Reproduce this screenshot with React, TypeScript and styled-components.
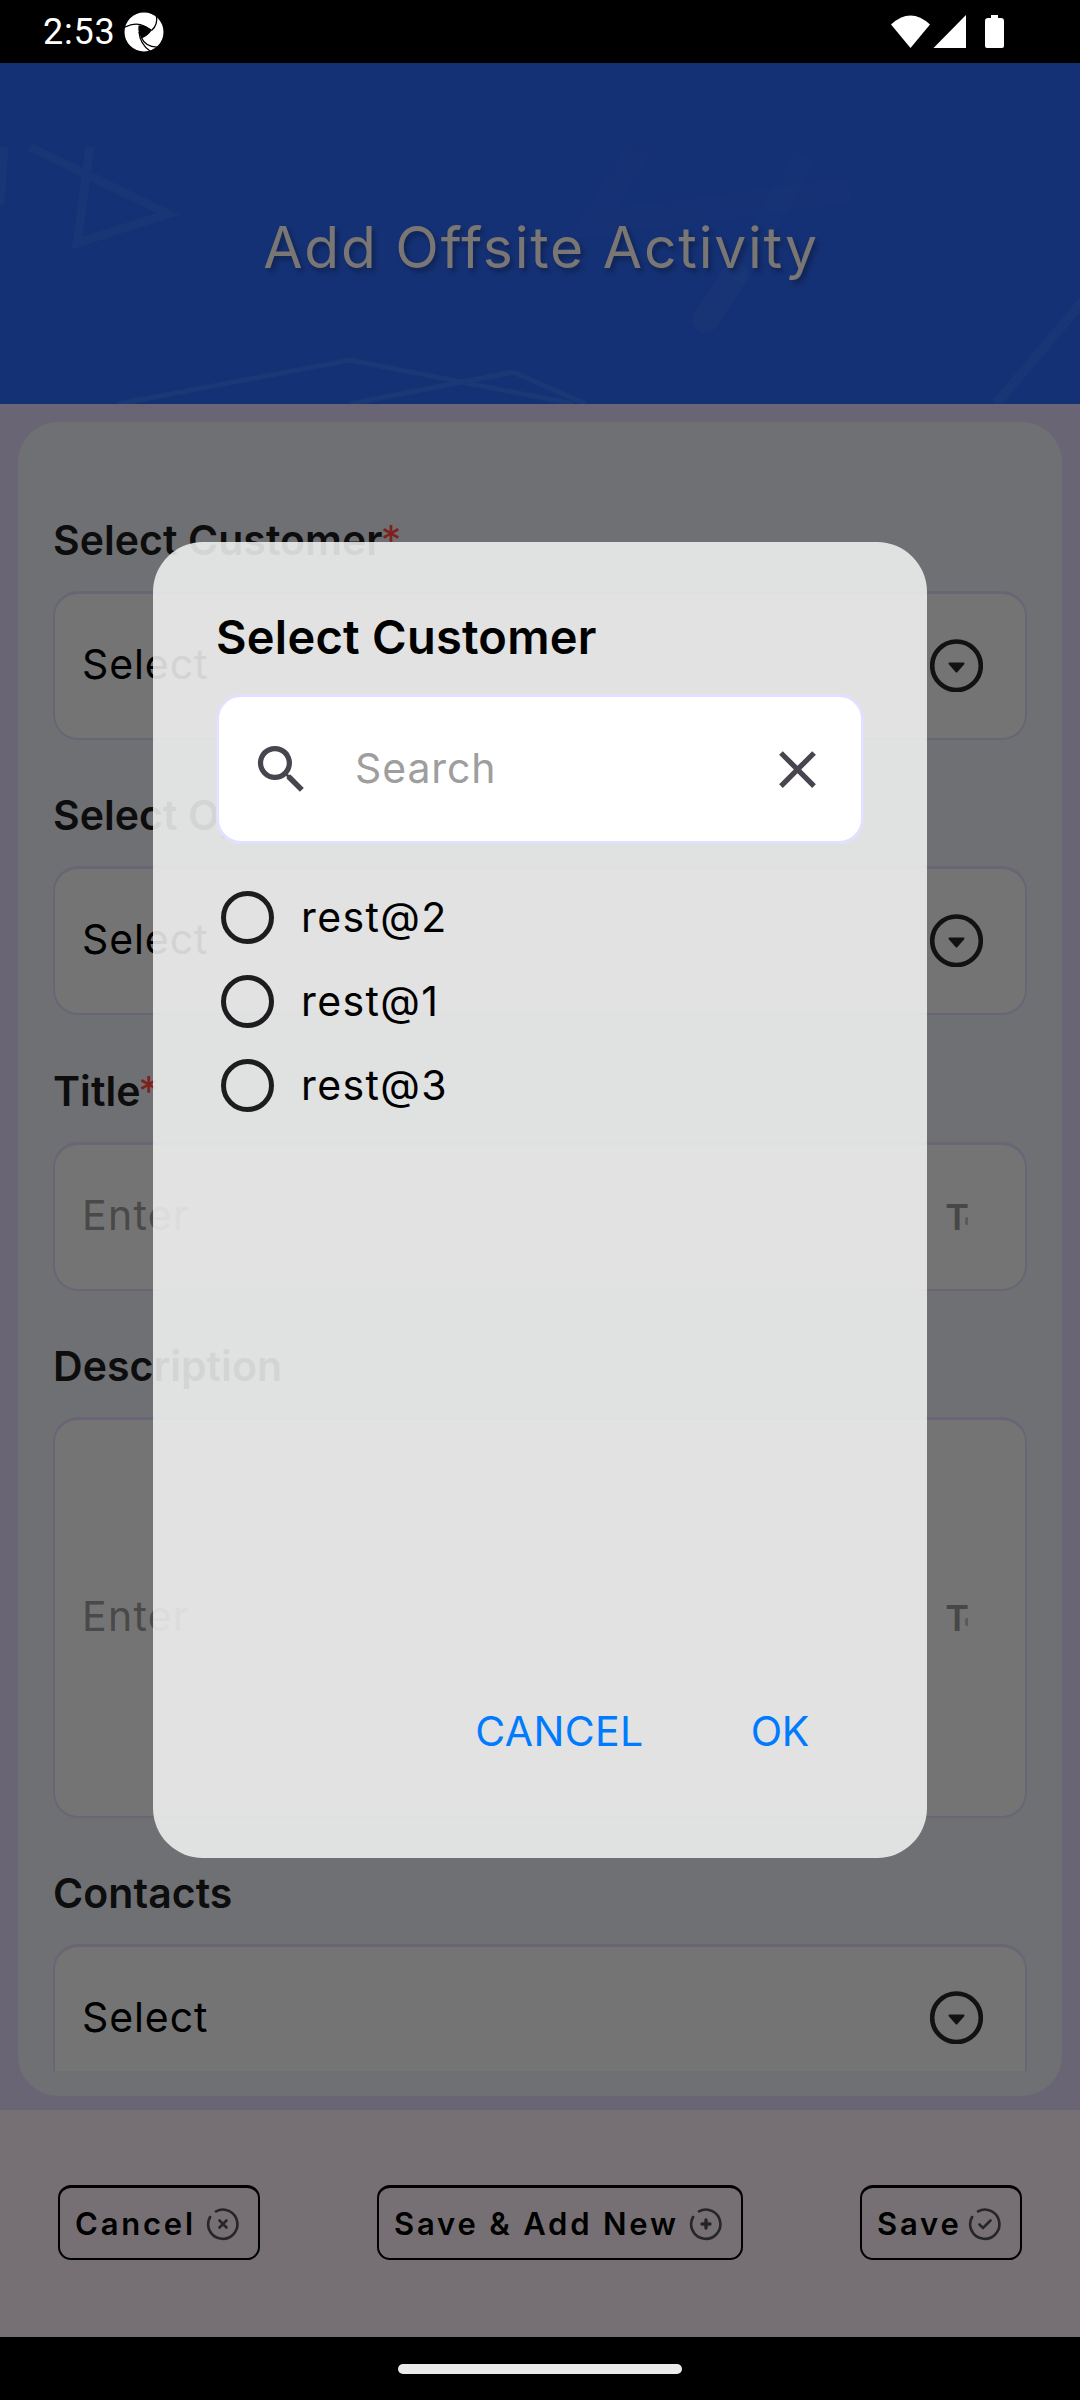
import React from 'react';
import styled, { createGlobalStyle } from 'styled-components';

const GlobalStyle = createGlobalStyle`
  *, *::before, *::after { box-sizing: border-box; }
  body { margin: 0; background: #000; }
`;

const Screen = styled.div`
  position: relative;
  display: flex;
  flex-direction: column;
  width: 1080px;
  height: 2400px;
  overflow: hidden;
  background: #696574;
  font-family: Inter, 'Liberation Sans', sans-serif;
  color: #000;
`;

/* System status bar */
const StatusBar = styled.header`
  display: flex;
  align-items: center;
  flex: none;
  height: 63px;
  padding: 0 74px 0 43px;
  background: #000;
`;

const Clock = styled.time`
  font-family: Roboto, sans-serif;
  font-size: 36px;
  line-height: 62px;
  letter-spacing: 0.8px;
  color: #fff;
`;

const StatusLogo = styled.svg`
  width: 40px;
  height: 40px;
  margin-left: 8px;
`;

const StatusIcons = styled.svg`
  width: 116px;
  height: 36px;
  margin-left: auto;
`;

/* Page header */
const Banner = styled.div`
  display: grid;
  flex: none;
  height: 341px;
  background: #153175;
  > * { grid-area: 1 / 1; }
`;

const BannerArt = styled.svg`
  width: 1080px;
  height: 341px;
`;

const BannerTitle = styled.h1`
  align-self: start;
  justify-self: center;
  margin: 150px 0 0 2px;
  font-size: 57px;
  font-weight: 400;
  line-height: 70px;
  letter-spacing: 1.75px;
  color: #797673;
  text-shadow: 3px 4px 5px rgba(0, 0, 0, 0.3);
`;

/* Form card */
const CardArea = styled.main`
  flex: none;
  height: 1706px;
  padding: 18px 18px 14px;
`;

const Card = styled.section`
  height: 1674px;
  padding: 92px 35px 25px;
  border-radius: 40px;
  background: #6f7073;
`;

const ScrollArea = styled.div`
  display: flex;
  flex-direction: column;
  gap: 49.3px;
  height: 100%;
  overflow: hidden;
`;

const FieldGroup = styled.div`
  display: flex;
  flex-direction: column;
  flex: none;
  gap: 25px;
`;

const Label = styled.label`
  font-size: 41px;
  font-weight: 600;
  line-height: 52px;
  letter-spacing: 0.05px;
  color: #0d0d0d;
`;

const Required = styled.span`
  margin-left: -2px;
  font-weight: 400;
  color: #7e211c;
`;

const Field = styled.div<{ $tall?: boolean }>`
  display: flex;
  align-items: center;
  justify-content: space-between;
  height: ${p => (p.$tall ? 400.8 : 149)}px;
  padding: 0 42px 2px 27px;
  border: 2px solid #696575;
  border-top-width: 3px;
  border-radius: 25px;
  background: #747474;
`;

const FieldText = styled.span<{ $placeholder?: boolean }>`
  padding-bottom: 2px;
  font-size: 41px;
  font-weight: 370;
  line-height: 52px;
  letter-spacing: ${p => (p.$placeholder ? 1.3 : 0.9)}px;
  color: ${p => (p.$placeholder ? '#494949' : '#000')};
`;

const ChevronIcon = styled.svg`
  width: 53px;
  height: 53px;
`;

/* Text-type marker: a "T" followed by a faint dot */
const TypeMark = styled.span`
  display: flex;
  align-items: center;
  height: 36px;
  margin: 2px 15px 0 0;
  font-size: 36px;
  font-weight: 600;
  line-height: 36px;
  letter-spacing: -4px;
  color: #474747;

  &::after {
    content: '';
    width: 3px;
    height: 8px;
    margin-top: 9px;
    border-radius: 2px 0 0 2px;
    background: #5a5a5a;
  }
`;

/* Bottom actions */
const ActionBar = styled.footer`
  display: flex;
  align-items: center;
  justify-content: space-between;
  flex: none;
  height: 227px;
  padding: 0 58px 2px;
  background: #767074;
`;

const ActionButton = styled.button<{ $width: number }>`
  display: flex;
  align-items: center;
  justify-content: space-between;
  width: ${p => p.$width}px;
  height: 75px;
  padding: 1px 17px 0 15px;
  border: 2px solid #000;
  border-top-width: 3px;
  border-radius: 13px;
  background: none;
  font-family: inherit;
  font-size: 31px;
  font-weight: 600;
  letter-spacing: 2.8px;
  white-space: nowrap;
  color: #000;
`;

const ActionIcon = styled.svg`
  flex: none;
  width: 36px;
  height: 36px;
`;

const NavBar = styled.nav`
  display: flex;
  align-items: center;
  justify-content: center;
  flex: none;
  height: 63px;
  background: #000;
`;

const NavPill = styled.div`
  width: 284px;
  height: 10px;
  border-radius: 5px;
  background: #ebebeb;
`;

/* Picker dialog */
const Dialog = styled.div`
  position: absolute;
  top: 542px;
  left: 153px;
  display: flex;
  flex-direction: column;
  width: 774px;
  height: 1316px;
  padding: 65px 63px 97px;
  border-radius: 50px;
  background: rgba(241, 242, 241, 0.87);
`;

const DialogTitle = styled.h2`
  margin: 0;
  font-size: 47px;
  font-weight: 600;
  line-height: 60px;
  letter-spacing: 0.25px;
`;

const SearchBox = styled.div`
  display: flex;
  align-items: center;
  flex: none;
  height: 150px;
  margin-top: 27px;
  padding: 0 32px 0 31px;
  border: 3px solid #e2e0ff;
  border-radius: 25px;
  background: #fff;
`;

const SearchIcon = styled.svg`
  width: 63px;
  height: 63px;
  fill: #49454f;
`;

const SearchHint = styled.span`
  flex: 1;
  margin-left: 42px;
  padding-bottom: 3px;
  font-size: 41px;
  font-weight: 370;
  line-height: 52px;
  letter-spacing: 0.9px;
  color: #9e9e9e;
`;

const OptionList = styled.ul`
  display: flex;
  flex-direction: column;
  margin: 31px 0 0;
  padding: 0 0 0 5px;
  list-style: none;
`;

const Option = styled.li`
  display: flex;
  align-items: center;
  gap: 27px;
  height: 84px;
  font-size: 41px;
  font-weight: 370;
  letter-spacing: 1.4px;
`;

const Radio = styled.span`
  width: 53px;
  height: 53px;
  border: 5px solid #1d1c1e;
  border-radius: 50%;
`;

const DialogActions = styled.div`
  display: flex;
  justify-content: flex-end;
  gap: 107px;
  margin-top: auto;
  padding-right: 55px;
`;

const DialogButton = styled.button<{ $spacing: number }>`
  padding: 0;
  border: 0;
  background: none;
  font-family: inherit;
  font-size: 41px;
  font-weight: 370;
  line-height: 60px;
  letter-spacing: ${p => p.$spacing}px;
  color: #007aff;
`;

const Chevron = () => (
  <ChevronIcon viewBox="0 0 53 53">
    <circle cx="26.5" cy="26.8" r="24.3" fill="none" stroke="#121212" strokeWidth="4.6" />
    <path d="M19.5 24.500h14l-7 8z" fill="#121212" stroke="#121212" strokeWidth="2" strokeLinejoin="round" />
  </ChevronIcon>
);

/* Ring with a gap at the upper left, shared by the three bottom buttons */
const RingIcon = ({ children }: { children: React.ReactNode }) => (
  <ActionIcon viewBox="0 0 36 36" fill="none" stroke="#262528" strokeWidth="2.6" strokeLinecap="round">
    <path d="M11 5.3A14.6 14.6 0 1 1 5.1 11" />
    {children}
  </ActionIcon>
);

const options = ['rest@2', 'rest@1', 'rest@3'];

export default function App() {
  return (
    <>
      <GlobalStyle />
      <Screen>
        <StatusBar>
          <Clock>2:53</Clock>
          <StatusLogo viewBox="0 0 40 40">
            <circle cx="20" cy="20" r="19.5" fill="#fff" />
            <path d="M14.5 13.5Q22 12.5 27.5 18.5Q24 24 17.5 26.5Q13.5 20.5 14.5 13.5z" fill="#000" />
            <g fill="none" stroke="#000" strokeWidth="1.3">
              <path d="M0 15.5Q12 9.500 20 14T27.5 18.5" />
              <path d="M27.5 18.5Q34 13 32.5 4" />
              <path d="M17 25Q22 36 35 35" />
              <path d="M15 20Q16 32 26 39" />
            </g>
          </StatusLogo>
          <StatusIcons viewBox="0 0 116 36" fill="#fff">
            <path d="M1 10.500Q20.500 -7.500 40 10.500L20.500 34z" />
            <path d="M76 1v33H43.500z" />
            <path d="M102 1h7v3h3q3 0 3 3v25q0 2 -2 2h-15q-2 0 -2 -2v-25q0 -3 3 -3h3z" transform="translate(-1 0)" />
          </StatusIcons>
        </StatusBar>

        <Banner>
          <BannerArt viewBox="0 63 1080 341" fill="none" stroke="#2c4b78" strokeOpacity="0.16">
            <path d="M30 147L168 214L77 243L90 147M4 147L0 205" strokeWidth="9" />
            <path d="M640 147L592 224L850 190" strokeWidth="26" strokeOpacity="0.04" />
            <path d="M805 155L735 280" strokeWidth="24" strokeOpacity="0.05" />
            <path d="M735 275L705 320" strokeWidth="26" strokeOpacity="0.13" strokeLinecap="round" />
            <path d="M118 404L350 360L574 404M350 404L513 372L586 404" strokeWidth="5" strokeOpacity="0.24" />
            <path d="M1084 300L996 404" strokeWidth="10" />
          </BannerArt>
          <BannerTitle>Add Offsite Activity</BannerTitle>
        </Banner>

        <CardArea>
          <Card>
            <ScrollArea>
              <FieldGroup>
                <Label>Select Customer<Required>*</Required></Label>
                <Field><FieldText>Select</FieldText><Chevron /></Field>
              </FieldGroup>
              <FieldGroup>
                <Label>Select Opportunity</Label>
                <Field><FieldText>Select</FieldText><Chevron /></Field>
              </FieldGroup>
              <FieldGroup>
                <Label>Title<Required>*</Required></Label>
                <Field><FieldText $placeholder>Enter</FieldText><TypeMark>T</TypeMark></Field>
              </FieldGroup>
              <FieldGroup>
                <Label>Description</Label>
                <Field $tall><FieldText $placeholder>Enter</FieldText><TypeMark>T</TypeMark></Field>
              </FieldGroup>
              <FieldGroup>
                <Label>Contacts</Label>
                <Field><FieldText>Select</FieldText><Chevron /></Field>
              </FieldGroup>
            </ScrollArea>
          </Card>
        </CardArea>

        <ActionBar>
          <ActionButton $width={202}>
            Cancel
            <RingIcon><path d="M14.500 14.500l7 7M21.500 14.500l-7 7" /></RingIcon>
          </ActionButton>
          <ActionButton $width={366}>
            Save &amp; Add New
            <RingIcon><path d="M18 14v8M14 18h8" strokeWidth="3.4" /></RingIcon>
          </ActionButton>
          <ActionButton $width={162}>
            Save
            <RingIcon><path d="M12.500 18.500l3.500 3.500l7.500 -7.500" /></RingIcon>
          </ActionButton>
        </ActionBar>
        <NavBar><NavPill /></NavBar>

        <Dialog role="dialog">
          <DialogTitle>Select Customer</DialogTitle>
          <SearchBox>
            <SearchIcon viewBox="0 0 24 24">
              <path d="M9.5,3A6.5,6.5 0 0,1 16,9.500C16,11.110 15.410,12.590 14.440,13.730L14.710,14H15.500L20.500,19L19,20.500L14,15.500V14.710L13.730,14.440C12.590,15.410 11.110,16 9.500,16A6.5,6.5 0 0,1 3,9.500A6.5,6.5 0 0,1 9.500,3M9.500,5C7,5 5,7 5,9.500C5,12 7,14 9.500,14C12,14 14,12 14,9.500C14,7 12,5 9.500,5Z" />
            </SearchIcon>
            <SearchHint>Search</SearchHint>
            <SearchIcon viewBox="0 0 24 24">
              <path d="M19,6.410L17.590,5L12,10.590L6.410,5L5,6.410L10.590,12L5,17.590L6.410,19L12,13.410L17.590,19L19,17.590L13.410,12L19,6.410Z" />
            </SearchIcon>
          </SearchBox>
          <OptionList>
            {options.map(name => (
              <Option key={name}><Radio />{name}</Option>
            ))}
          </OptionList>
          <DialogActions>
            <DialogButton $spacing={0.4}>CANCEL</DialogButton>
            <DialogButton $spacing={-0.3}>OK</DialogButton>
          </DialogActions>
        </Dialog>
      </Screen>
    </>
  );
}
